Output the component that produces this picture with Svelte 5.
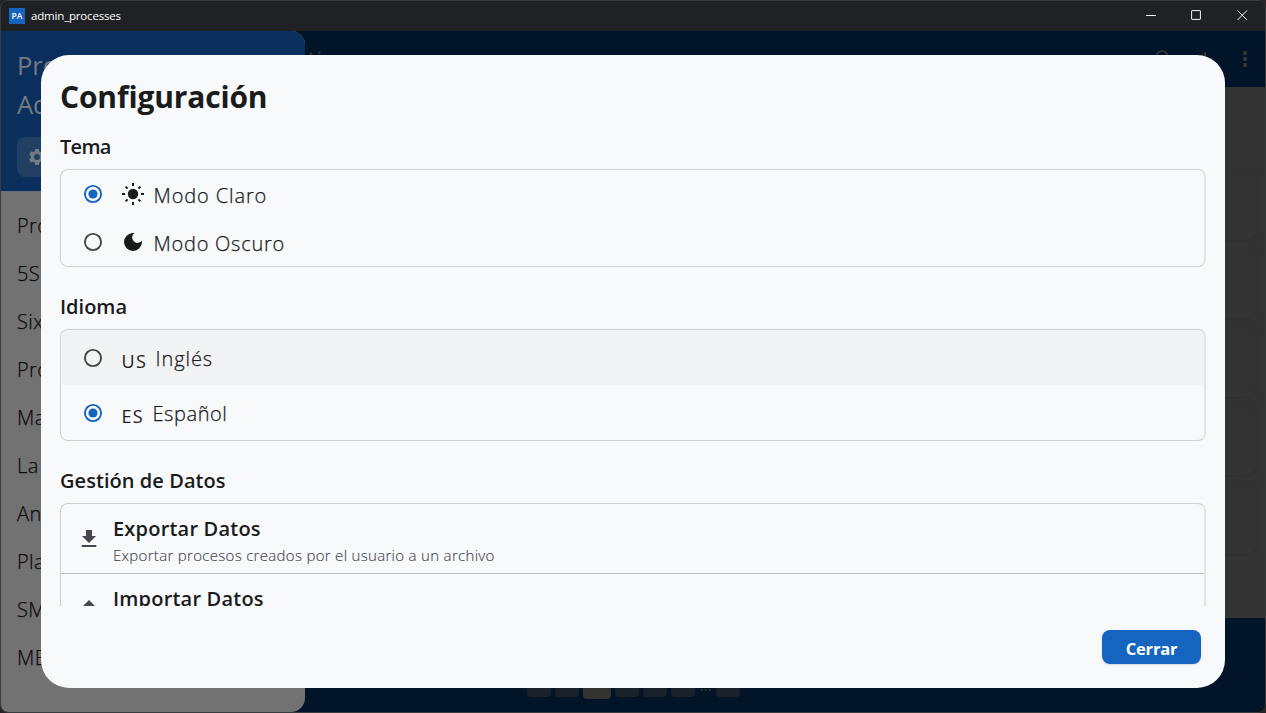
<script>
  const processes = ['Procesos', '5S', 'Six Sigma', 'Procesos Lean', 'Mapas', 'La Cadena', 'Análisis', 'Planificación', 'SMED', 'MES'];
  const pages = ['1', '2', '3', '4', '5', '6', '…', '10'];
  let theme = $state('light');
  let language = $state('es');
</script>

{#snippet radio(on)}
  <svg class="radio" class:on width="20" height="20" viewBox="0 0 20 20">
    <circle cx="10" cy="10" r="8.1" fill="none" stroke="currentColor" stroke-width="1.9" />
    {#if on}<circle cx="10" cy="10" r="4.6" fill="currentColor" />{/if}
  </svg>
{/snippet}

<div class="window">
  <header class="titlebar">
    <span class="logo">PA</span>
    <span class="apptitle">admin_processes</span>
    <span class="controls">
      <svg width="46" height="31" viewBox="0 0 46 31"><path d="M17.500 15.5h10" /></svg>
      <svg width="46" height="31" viewBox="0 0 46 31"><rect x="18" y="10.5" width="9" height="9" rx=".5" /></svg>
      <svg width="46" height="31" viewBox="0 0 46 31"><path d="M18.5 10.5l9.500 9.500M28 10.500l-9.500 9.500" /></svg>
    </span>
  </header>

  <div class="app">
    <aside>
      <div class="brand">
        <div>Procesos</div>
        <div>Administrativos</div>
        <span class="gear">
          <svg width="20" height="20" viewBox="0 0 24 24"><path fill="currentColor" d="M19.14 12.94c.04-.3.06-.61.06-.94s-.02-.64-.07-.94l2.03-1.58a.49.49 0 0 0 .12-.61l-1.92-3.32a.49.49 0 0 0-.59-.22l-2.39.96a7 7 0 0 0-1.62-.94l-.36-2.54a.48.48 0 0 0-.48-.41h-3.84a.48.48 0 0 0-.47.41l-.36 2.54c-.59.24-1.13.57-1.62.94l-2.39-.96a.48.48 0 0 0-.59.22L2.74 8.87a.47.47 0 0 0 .12.61l2.03 1.58a6 6 0 0 0 0 1.88l-2.03 1.58a.49.49 0 0 0-.12.61l1.92 3.32c.12.22.37.29.59.22l2.39-.96c.5.38 1.03.7 1.62.94l.36 2.54c.05.24.24.41.48.41h3.84c.24 0 .44-.17.47-.41l.36-2.54a7 7 0 0 0 1.62-.94l2.39.96c.22.08.47 0 .59-.22l1.92-3.32a.47.47 0 0 0-.12-.61zM12 15.6a3.6 3.6 0 1 1 0-7.2 3.6 3.6 0 0 1 0 7.2z" /></svg>
        </span>
      </div>
      <nav>
        {#each processes as item}<div>{item}</div>{/each}
      </nav>
    </aside>
    <main>
      <div class="toolbar">
        <span class="heading">ktivos</span>
        <span class="tools">
          <svg width="24" height="24" viewBox="0 0 24 24"><circle cx="11" cy="9.5" r="5.5" fill="none" stroke="currentColor" stroke-width="2" /><path d="M15 14l6 6" stroke="currentColor" stroke-width="2" /></svg>
          <svg width="24" height="24" viewBox="0 0 24 24"><path d="M13 5v14M6 12h14" stroke="currentColor" stroke-width="2" /></svg>
          <svg width="24" height="24" viewBox="0 0 24 24" fill="currentColor"><circle cx="12" cy="6" r="2.200" /><circle cx="12" cy="12" r="2.200" /><circle cx="12" cy="18" r="2.200" /></svg>
        </span>
      </div>
      <div class="list">
        {#each [1, 2, 3, 4, 5] as card (card)}<div class="item"></div>{/each}
      </div>
      <div class="pager">
        {#each pages as page}<span class:current={page === '3'} class:dots={page === '…'}>{page === '…' ? '...' : ''}</span>{/each}
      </div>
    </main>
  </div>

  <div class="overlay">
    <section class="dialog">
      <h1>Configuración</h1>
      <div class="scroll">
        <h2 class="tema">Tema</h2>
        <div class="card themes">
          <button class="option" onclick={() => (theme = 'light')}>
            {@render radio(theme === 'light')}
            <svg class="glyph" width="24" height="24" viewBox="0 0 24 24"><circle cx="12" cy="12" r="5.2" fill="currentColor" /><path d="M12 1v3M12 20v3M1 12h3M20 12h3M4.600 4.600l2 2M17.400 17.400l2 2M4.600 19.400l2-2M17.400 6.600l2-2" fill="none" stroke="currentColor" stroke-width="2" /></svg>
            <span class="label claro">Modo Claro</span>
          </button>
          <button class="option" onclick={() => (theme = 'dark')}>
            {@render radio(theme === 'dark')}
            <svg class="glyph" width="24" height="24" viewBox="0 0 24 24"><path fill="currentColor" d="M12 3a9 9 0 1 0 9 9c0-.46-.04-.92-.1-1.36A5.4 5.4 0 1 1 13.36 3.1 9 9 0 0 0 12 3z" /></svg>
            <span class="label oscuro">Modo Oscuro</span>
          </button>
        </div>
        <h2 class="idioma">Idioma</h2>
        <div class="card languages">
          <button class="option hover" onclick={() => (language = 'en')}>
            {@render radio(language === 'en')}
            <span class="flag us">US</span><span class="label ingles">Inglés</span>
          </button>
          <button class="option" onclick={() => (language = 'es')}>
            {@render radio(language === 'es')}
            <span class="flag es">ES</span><span class="label espanol">Español</span>
          </button>
        </div>
        <h2 class="gestion">Gestión de Datos</h2>
        <div class="card data">
          <div class="action">
            <svg width="24" height="24" viewBox="0 0 24 24"><path fill="currentColor" d="M19 9h-4V3H9v6H5l7 7zM4.700 18v2h14.600v-2z" /></svg>
            <div><div class="name exp">Exportar Datos</div><div class="desc">Exportar procesos creados por el usuario a un archivo</div></div>
          </div>
          <div class="action">
            <svg width="24" height="24" viewBox="0 0 24 24"><path fill="currentColor" d="M5 10h4v6h6v-6h4l-7-7zM4.700 18v2h14.600v-2z" /></svg>
            <div><div class="name imp">Importar Datos</div><div class="desc">Importar procesos desde un archivo</div></div>
          </div>
        </div>
      </div>
      <footer><button class="close">Cerrar</button></footer>
    </section>
  </div>
</div>

<style>
  :global(body) { margin: 0; background: #292526; overflow: hidden; }
  * { box-sizing: border-box; }
  .window { position: relative; width: 1266px; height: 713px; overflow: hidden; display: flex; flex-direction: column; border: 1px solid #393b3d; border-radius: 8px; background: #202124; font-family: "Open Sans", "Noto Sans", sans-serif; }
  .titlebar { height: 30px; flex: none; display: flex; align-items: center; padding-left: 8px; color: #fff; background: #202124; }
  .logo { width: 16px; height: 16px; margin-top: -1px; background: #1664c0; font: 600 8.500px/16px "Open Sans", sans-serif; text-align: center; }
  .apptitle { margin-left: 6px; font-size: 11.5px; letter-spacing: -.18px; line-height: 16px; }
  .controls { margin-left: auto; display: flex; margin-top: -1px; }
  .controls svg { display: block; fill: none; stroke: #fff; stroke-width: 1; }
  .controls svg:nth-child(-n+2) { width: 45px; }

  .app { flex: 1; min-height: 0; display: flex; background: #021427; }
  aside { width: 304px; background: #727272; border-radius: 0 14px 14px 0; overflow: hidden; }
  .brand { height: 161px; padding: 15px 16px; background: #0b2f5c; border-bottom: 1px solid #617080; color: #737a83; font-weight: 400; font-size: 25.500px; line-height: 39px; }
  .gear { display: flex; align-items: center; width: 130px; height: 40px; margin-top: 13px; padding-left: 10px; border-radius: 8px; background: #213f62; color: #747b83; }
  nav { padding: 10px 16px; color: #0c0c0c; font-size: 20px; line-height: 48px; font-weight: 300; letter-spacing: .4px; white-space: nowrap; -webkit-text-stroke: .25px currentColor; }
  nav div { height: 48px; }
  main { flex: 1; display: flex; flex-direction: column; }
  .toolbar { height: 56px; display: flex; align-items: center; justify-content: space-between; color: #333638; padding-right: 8px; }
  .heading { font-size: 25px; margin-left: -11px; clip-path: inset(0 0 0 11px); line-height: 30px; }
  .tools { display: flex; gap: 17px; }
  .list { height: 531px; flex: none; background: #333; padding: 82px 8px 0 12px; display: flex; flex-direction: column; gap: 8px; }
  .item { height: 70.500px; border-radius: 12px; box-shadow: 0 1px 2px #2e2e2e; flex: none; }
  .pager { display: flex; gap: 4px; padding: 53px 0 13px 222px; align-items: center; height: 94px; flex: none; }
  .pager span { width: 24px; height: 24px; border-radius: 4px; background: #19212a; }
  .pager .current { width: 28px; height: 28px; background: #343332; }
  .pager .dots { width: 13px; background: none; color: #333638; font-size: 16px; line-height: 25px; text-align: center; }

  .overlay { position: absolute; inset: 0; display: flex; padding: 54px 40px 24px; }
  .dialog { width: 1184px; height: 633px; border-radius: 28px; background: #f8f9fb; display: flex; flex-direction: column; padding: 20px 18px 24px 19px; color: #1a1b1c; }
  h1, h2 { margin: 0; white-space: nowrap; }
  h1 { font-size: 30px; line-height: 44px; height: 48px; font-weight: 700; letter-spacing: -.16px; }
  .scroll { height: 483px; overflow: hidden; flex: none; }
  h2 { font-size: 20px; line-height: 28px; font-weight: 600; }
  .tema { height: 46px; padding-top: 10px; letter-spacing: -.7px; }
  .idioma, .gestion { height: 62px; padding-top: 26px; }
  .gestion { letter-spacing: .06px; }
  .card { width: 1146px; border: 1px solid #cdcfd2; border-right: 2px solid #e1e3e5; border-radius: 8px; overflow: hidden; }
  .themes { height: 98px; }
  .languages { height: 112px; }
  .option { width: 100%; display: flex; align-items: center; height: 48px; border: 0; padding: 0 0 0 22px; background: none; font: 300 20px/28px "Open Sans", sans-serif; color: #1a1b1c; text-align: left; }
  .languages .option { height: 55px; }
  .hover { background: #f2f3f5; }
  .radio { color: #47464f; flex: none; }
  .radio.on { color: #1565c0; }
  .glyph { margin-left: 18px; }
  .label { margin-left: 8.500px; padding-top: 3px; white-space: nowrap; -webkit-text-stroke: .25px currentColor; }
  .claro { letter-spacing: .88px; }
  .oscuro { letter-spacing: .75px; }
  .ingles { letter-spacing: .9px; }
  .espanol { letter-spacing: .58px; }
  .flag { margin-left: 18.500px; padding-top: 6px; font-size: 18px; font-weight: 400; letter-spacing: 1.300px; }
  .data { height: 142px; }
  .action { height: 70px; display: flex; align-items: center; padding-left: 16px; gap: 12px; color: #47464f; border-bottom: 1px solid #bfc1c4; }
  .name { color: #1a1b1c; font-size: 20px; line-height: 28px; font-weight: 600; padding-top: 3px; letter-spacing: .2px; }
  .desc { font-size: 15px; line-height: 22px; font-weight: 300; padding-top: 1px; letter-spacing: .31px; -webkit-text-stroke: .15px currentColor; }
  footer { margin-top: auto; display: flex; justify-content: flex-end; padding-right: 6px; }
  .close { width: 99px; height: 34px; border: 0; padding: 3px 0 0; border-radius: 8px; background: #1565c0; color: #fff; font: 700 16.500px/24px "Open Sans", sans-serif; letter-spacing: -.2px; box-shadow: 0 1px 2px #0002; }
</style>
